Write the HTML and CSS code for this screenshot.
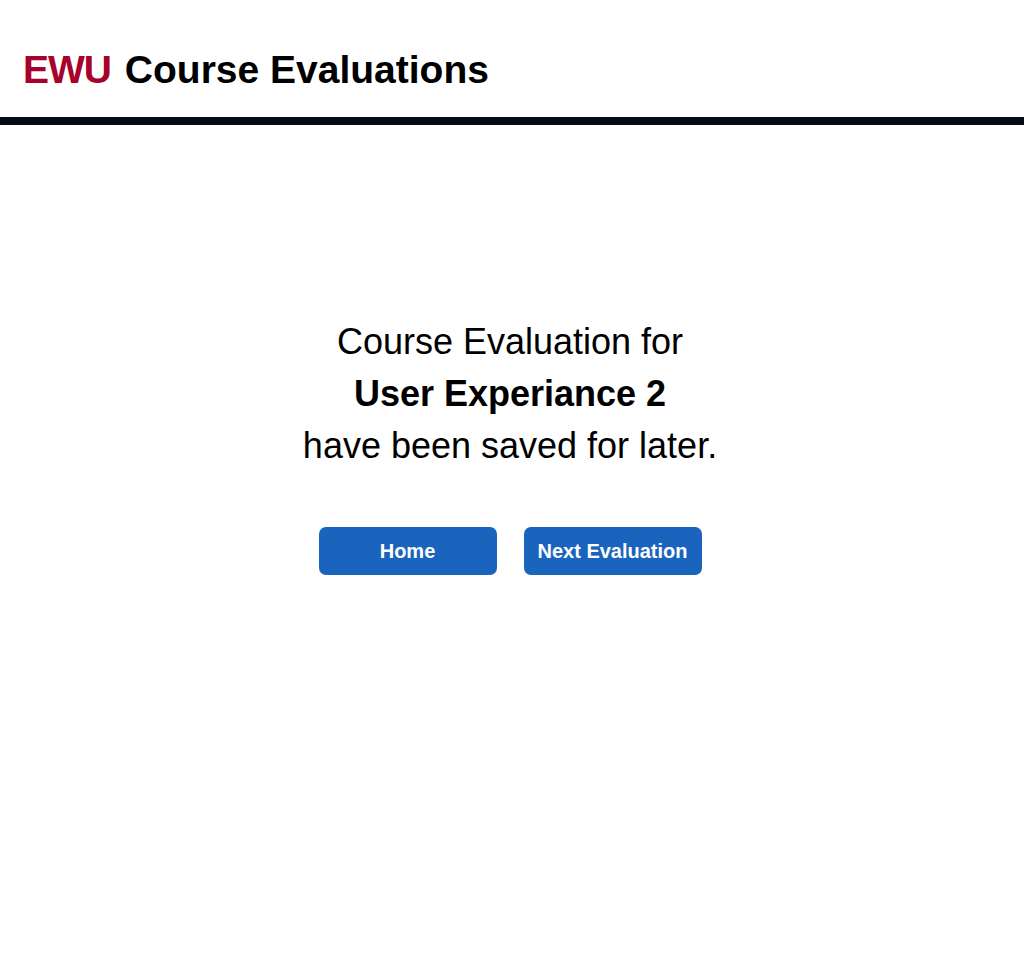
FILE: index.html
```html
<!DOCTYPE html>
<html lang="en">
<head>
<meta charset="utf-8">
<title>EWU Course Evaluations</title>
<link rel="stylesheet" href="styles.css">
</head>
<body>
<header class="site-header">
  <h1 class="site-title"><span class="brand">EWU</span> Course Evaluations</h1>
</header>
<main class="confirm">
  <p class="message">
    <span class="line">Course Evaluation for</span>
    <strong class="line course">User Experiance 2</strong>
    <span class="line">have been saved for later.</span>
  </p>
  <div class="actions">
    <button class="btn" type="button">Home</button>
    <button class="btn" type="button">Next Evaluation</button>
  </div>
</main>
</body>
</html>
```

FILE: styles.css
```css
html, body {
  margin: 0;
  padding: 0;
  background: #ffffff;
  font-family: "Liberation Sans", Arial, sans-serif;
  color: #000000;
}

.site-header {
  height: 67px;
  padding-top: 50px;
  padding-left: 23px;
  border-bottom: 8px solid #030b14;
}

.site-title {
  margin: 0;
  font-size: 39px;
  font-weight: 700;
  line-height: 1;
}

.brand {
  color: #a6022a;
  letter-spacing: -1px;
  margin-right: 3px;
}

.confirm {
  display: flex;
  flex-direction: column;
  align-items: center;
  padding-top: 191px;
  padding-right: 4px;
}

.message {
  margin: 0;
  display: flex;
  flex-direction: column;
  align-items: center;
  font-size: 36px;
  line-height: 52px;
}

.course {
  font-weight: 700;
}

.actions {
  display: flex;
  gap: 27px;
  margin-top: 55px;
}

.btn {
  width: 178px;
  height: 48px;
  border: none;
  border-radius: 7px;
  background: #1a64be;
  color: #ffffff;
  font-family: "Liberation Sans", Arial, sans-serif;
  font-size: 20px;
  font-weight: 700;
  padding: 0;
  cursor: pointer;
}
```
